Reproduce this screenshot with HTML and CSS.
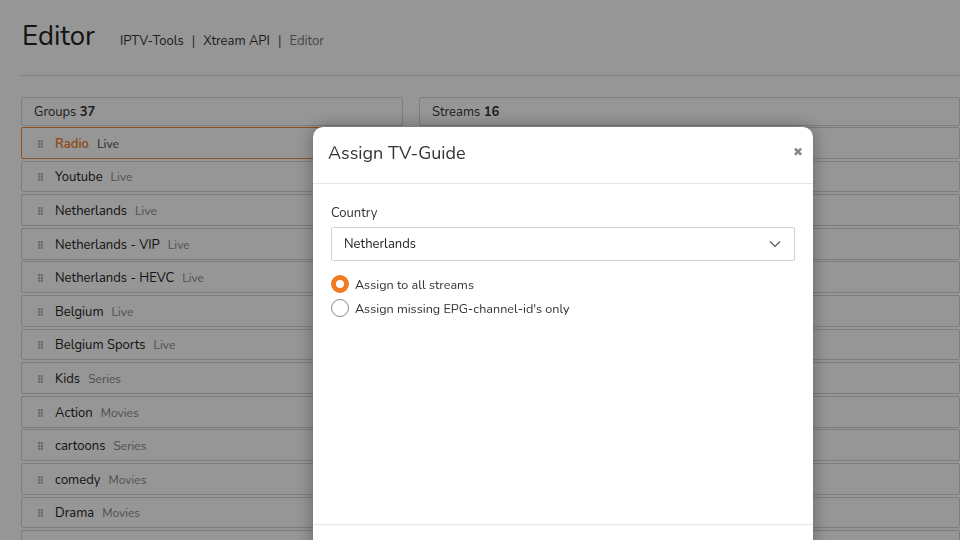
FILE: index.html
```html
<!DOCTYPE html>
<html>
<head>
<meta charset="utf-8">
<link rel="stylesheet" href="styles.css">
</head>
<body>
<div class="page">
  <header class="top">
    <h1 class="title">Editor</h1>
    <nav class="crumbs">
      <span class="crumb">IPTV-Tools</span><span class="sep">|</span><span class="crumb">Xtream API</span><span class="sep">|</span><span class="crumb current">Editor</span>
    </nav>
  </header>
  <div class="rule"></div>
  <div class="columns">
    <section class="col groups">
      <div class="col-head">Groups <b>37</b></div>
      <ul class="list">
        <li class="row active"><span class="grip"></span><span class="name">Radio</span><span class="type">Live</span></li>
        <li class="row"><span class="grip"></span><span class="name">Youtube</span><span class="type">Live</span></li>
        <li class="row"><span class="grip"></span><span class="name">Netherlands</span><span class="type">Live</span></li>
        <li class="row"><span class="grip"></span><span class="name">Netherlands - VIP</span><span class="type">Live</span></li>
        <li class="row"><span class="grip"></span><span class="name">Netherlands - HEVC</span><span class="type">Live</span></li>
        <li class="row"><span class="grip"></span><span class="name">Belgium</span><span class="type">Live</span></li>
        <li class="row"><span class="grip"></span><span class="name">Belgium Sports</span><span class="type">Live</span></li>
        <li class="row"><span class="grip"></span><span class="name">Kids</span><span class="type">Series</span></li>
        <li class="row"><span class="grip"></span><span class="name">Action</span><span class="type">Movies</span></li>
        <li class="row"><span class="grip"></span><span class="name">cartoons</span><span class="type">Series</span></li>
        <li class="row"><span class="grip"></span><span class="name">comedy</span><span class="type">Movies</span></li>
        <li class="row"><span class="grip"></span><span class="name">Drama</span><span class="type">Movies</span></li>
        <li class="row"></li>
      </ul>
    </section>
    <section class="col streams">
      <div class="col-head">Streams <b>16</b></div>
      <ul class="list">
        <li class="row"></li><li class="row"></li><li class="row"></li><li class="row"></li>
        <li class="row"></li><li class="row"></li><li class="row"></li><li class="row"></li>
        <li class="row"></li><li class="row"></li><li class="row"></li><li class="row"></li>
        <li class="row"></li>
      </ul>
    </section>
  </div>
</div>

<div class="overlay"></div>
<div class="modal">
  <div class="modal-head">
    <h2 class="modal-title">Assign TV-Guide</h2>
    <span class="close">&#10006;</span>
  </div>
  <div class="modal-body">
    <label class="label">Country</label>
    <div class="select">
      <span>Netherlands</span>
      <svg class="chev" width="12" height="8" viewBox="0 0 12 8"><path d="M1 1.5 L6 6.5 L11 1.5" fill="none" stroke="#555" stroke-width="1.2"/></svg>
    </div>
    <div class="radio checked"><span class="dot"></span><span>Assign to all streams</span></div>
    <div class="radio"><span class="dot"></span><span>Assign missing EPG-channel-id's only</span></div>
  </div>
  <div class="modal-foot"></div>
</div>
</body>
</html>
```

FILE: styles.css
```css
* { box-sizing: border-box; }
html, body { margin: 0; padding: 0; }
body {
  width: 960px;
  height: 540px;
  overflow: hidden;
  background: #fff;
  font-family: "Nunito", "Open Sans", "DejaVu Sans", sans-serif;
  color: #333;
}
.page { padding: 0 0 0 21px; }
.top {
  display: flex;
  align-items: baseline;
  height: 75px;
  padding-top: 17px;
}
.title {
  margin: 0 0 0 1px;
  font-size: 27.5px;
  font-weight: 400;
  color: #222;
}
.crumbs {
  margin-left: 25px;
  font-size: 13px;
  color: #333;
}
.sep { margin: 0 8px; color: #555; }
.crumb.current { color: #777; }
.rule { height: 1px; background: #d8d8d8; }
.columns {
  display: flex;
  gap: 16px;
  margin-top: 21px;
}
.col.groups { width: 382px; flex: none; }
.col.streams { flex: 1; }
.col-head {
  height: 29px;
  border: 1px solid #d6d6d6;
  border-radius: 2px;
  padding: 5px 12px;
  font-size: 13px;
  color: #333;
}
.col-head b { font-weight: 700; }
.list { list-style: none; margin: 1px 0 0; padding: 0; }
.row {
  display: flex;
  align-items: center;
  height: 31.8px;
  margin-bottom: 1.8px;
  border: 1px solid #d4d4d4;
  border-radius: 2px;
  padding-left: 16px;
  padding-top: 2px;
  font-size: 13px;
}
.row.active { border-color: #f08a3a; }
.grip {
  width: 5px;
  height: 8px;
  margin-right: 12px;
  background-image: radial-gradient(circle, #777 0.9px, transparent 1.1px);
  background-size: 3px 3px;
  background-position: -0.5px -0.5px;
}
.name { color: #222; }
.type { margin-left: 8px; color: #888; font-size: 12px; }
.row.active .name { color: #f07a20; font-weight: 600; }
.row.active .type { color: #666; font-weight: 600; }

.overlay {
  position: fixed;
  inset: 0;
  background: rgba(0, 0, 0, 0.41);
}
.modal {
  position: fixed;
  left: 313px;
  top: 127px;
  width: 500px;
  height: 440px;
  background: #fff;
  border-radius: 10px;
  box-shadow: 0 0 18px rgba(0, 0, 0, 0.35);
  display: flex;
  flex-direction: column;
}
.modal-head {
  display: flex;
  justify-content: space-between;
  align-items: center;
  height: 57px;
  padding: 0 10px 4px 15px;
  border-bottom: 1px solid #e6e6e6;
}
.modal-title {
  margin: 0;
  font-size: 18px;
  font-weight: 400;
  color: #333;
}
.close {
  font-size: 12px;
  color: #888;
  font-weight: 700;
  margin-top: -3px;
}
.modal-body {
  padding: 20px 18px 0 18px;
  height: 341px;
  border-bottom: 1px solid #e6e6e6;
}
.label {
  display: block;
  font-size: 13px;
  color: #333;
  margin-bottom: 5px;
}
.select {
  display: flex;
  justify-content: space-between;
  align-items: center;
  height: 34px;
  border: 1px solid #d0d0d0;
  border-radius: 2px;
  padding: 0 13px 0 12px;
  font-size: 13px;
  color: #222;
  margin-bottom: 14px;
}
.radio {
  display: flex;
  align-items: center;
  font-size: 12.6px;
  color: #333;
  height: 18px;
  margin-bottom: 6px;
}
.dot {
  width: 18px;
  height: 18px;
  border-radius: 50%;
  border: 1px solid #888;
  margin-right: 6px;
  flex: none;
}
.radio.checked .dot {
  border: 5.5px solid #f07a20;
  background: #fff;
}
```
